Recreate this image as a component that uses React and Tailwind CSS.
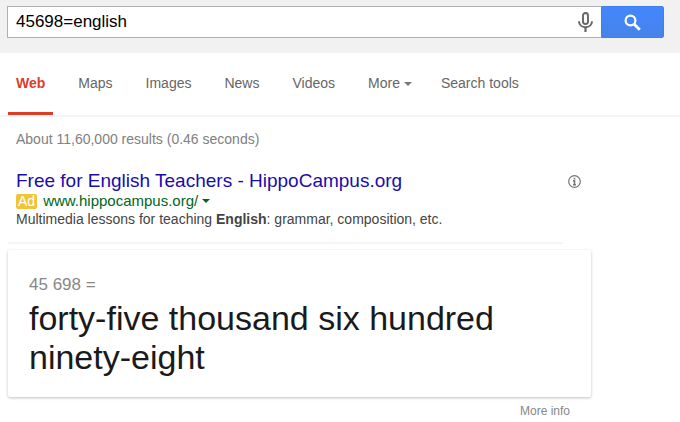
import React from 'react'

const tabs = ['Maps', 'Images', 'News', 'Videos']

function SearchBar() {
  return (
    <header className="bg-[#f1f1f1] pl-[7px] pr-4 pt-1.5 pb-[15px]">
      <form className="flex h-8" onSubmit={(e) => e.preventDefault()}>
        <div className="flex flex-1 min-w-0 items-center bg-white border border-r-0 border-[#b0b0b0]">
          <input
            type="text"
            aria-label="Search"
            defaultValue="45698=english"
            className="flex-1 min-w-0 h-full pl-2 text-[17px] text-black outline-none"
          />
          <button type="button" aria-label="Search by voice" className="px-2">
            <svg width="15" height="20" viewBox="0 0 15 20" fill="none" stroke="#666" strokeWidth="1.9">
              <rect x="5" y="1" width="5" height="11" rx="2.5" />
              <path d="M1 9.2c0 3.8 2.9 6 6.5 6s6.5-2.2 6.5-6" />
              <path d="M7.5 15v5" strokeWidth="2.2" />
            </svg>
          </button>
        </div>
        <button
          type="submit"
          aria-label="Search"
          className="flex w-[63px] items-center justify-center rounded-r-xs border border-[#3f7fee] bg-linear-to-b from-[#4387fd] to-[#4683ea]"
        >
          <svg width="17" height="17" viewBox="0 0 17 17" fill="none" stroke="#fff">
            <circle cx="6.5" cy="6.5" r="4.9" strokeWidth="2.2" />
            <path d="M10 10l5.8 5.8" strokeWidth="2.8" />
          </svg>
        </button>
      </form>
    </header>
  )
}

function NavTabs() {
  return (
    <nav className="flex h-16 gap-[17px] border-b-2 border-[#f5f5f5] pl-2 text-sm text-[#666]">
      <a href="#web" className="flex items-center border-b-3 border-[#dd3c27] px-2 font-bold text-[#dd3c27]">
        Web
      </a>
      {tabs.map((tab) => (
        <a key={tab} href={`#${tab.toLowerCase()}`} className="flex items-center border-b-3 border-transparent px-2">
          {tab}
        </a>
      ))}
      <button type="button" className="flex items-center gap-1 border-b-3 border-transparent pl-2 pr-1">
        More
        <svg width="8" height="4" viewBox="0 0 8 4" fill="#777" className="mt-0.5">
          <path d="M0 0h8L4 4z" />
        </svg>
      </button>
      <button type="button" className="flex items-center border-b-3 border-transparent px-2">
        Search tools
      </button>
    </nav>
  )
}

function AdResult() {
  return (
    <section className="mr-7 border-b-2 border-[#f5f5f5] pl-2 pb-[15px]">
      <div className="flex items-center justify-between -mr-[18px]">
        <h3 className="text-[19px] leading-6">
          <a href="#ad" className="text-[#1a0dab]">Free for English Teachers - HippoCampus.org</a>
        </h3>
        <button type="button" aria-label="Why this ad?">
          <svg width="13" height="13" viewBox="0 0 13 13" fill="none" stroke="#777">
            <circle cx="6.5" cy="6.5" r="5.8" strokeWidth="1.2" />
            <path d="M6.5 2.8v1.7M5 5.7h1.5v4M5 9.7h3" strokeWidth="1.6" />
          </svg>
        </button>
      </div>
      <div className="flex items-center text-[15px] leading-4 text-[#006621]">
        <span className="mr-1.5 rounded-xs bg-[#efc439] px-0.5 text-sm leading-[15px] text-white">Ad</span>
        <cite className="not-italic">www.hippocampus.org/</cite>
        <button type="button" aria-label="More about this result" className="ml-1">
          <svg width="8" height="4" viewBox="0 0 8 4" fill="#006621">
            <path d="M0 0h8L4 4z" />
          </svg>
        </button>
      </div>
      <p className="pt-0.5 text-sm leading-4 text-[#444]">
        Multimedia lessons for teaching <b>English</b>: grammar, composition, etc.
      </p>
    </section>
  )
}

function AnswerCard() {
  return (
    <section className="mt-1.5 rounded-xs bg-white px-[21px] pt-[23px] pb-5 shadow-[0_1px_3px_rgba(0,0,0,0.25)]">
      <div className="pb-0.5 text-[17px] leading-6 text-[#878787]">45 698 =</div>
      <div className="text-[34px] leading-[39px] text-[#1a1a1a]">forty-five thousand six hundred ninety-eight</div>
    </section>
  )
}

export default function App() {
  return (
    <div className="min-h-screen bg-white font-['Liberation_Sans',Arial,sans-serif]">
      <SearchBar />
      <NavTabs />
      <main className="ml-2 max-w-[583px]">
        <p className="pl-2 pt-3 pb-5 text-sm leading-5 text-[#808080]">About 11,60,000 results (0.46 seconds)</p>
        <AdResult />
        <AnswerCard />
        <div className="pt-1.5 pr-[21px] text-right text-xs leading-4 text-[#878787]">
          <a href="#info">More info</a>
        </div>
      </main>
    </div>
  )
}
